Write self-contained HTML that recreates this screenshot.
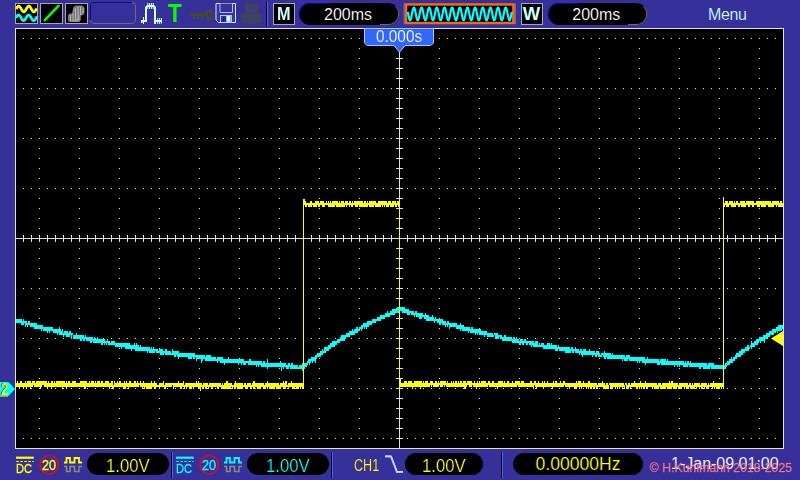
<!DOCTYPE html>
<html lang="en"><head><meta charset="utf-8"><title>DSO</title>
<style>
html,body{margin:0;padding:0}
body{width:800px;height:480px;background:#37309b;position:relative;overflow:hidden;font-family:"Liberation Sans",sans-serif}
.t{position:absolute;white-space:nowrap;line-height:1;margin:0;padding:0}
</style></head>
<body>
<svg width="800" height="480" viewBox="0 0 800 480" style="position:absolute;left:0;top:0" shape-rendering="crispEdges"><rect x="15" y="28" width="769" height="421" fill="#dfe2df"/><rect x="16" y="29" width="767" height="419" fill="#000"/><path fill="#dce0dc" d="M23 38h1v1h-1zM31 38h1v1h-1zM39 38h1v1h-1zM47 38h1v1h-1zM55 38h1v1h-1zM63 38h1v1h-1zM71 38h1v1h-1zM79 38h1v1h-1zM87 38h1v1h-1zM95 38h1v1h-1zM103 38h1v1h-1zM111 38h1v1h-1zM119 38h1v1h-1zM127 38h1v1h-1zM135 38h1v1h-1zM143 38h1v1h-1zM151 38h1v1h-1zM159 38h1v1h-1zM167 38h1v1h-1zM175 38h1v1h-1zM183 38h1v1h-1zM191 38h1v1h-1zM199 38h1v1h-1zM207 38h1v1h-1zM215 38h1v1h-1zM223 38h1v1h-1zM231 38h1v1h-1zM239 38h1v1h-1zM247 38h1v1h-1zM255 38h1v1h-1zM263 38h1v1h-1zM271 38h1v1h-1zM279 38h1v1h-1zM287 38h1v1h-1zM295 38h1v1h-1zM303 38h1v1h-1zM311 38h1v1h-1zM319 38h1v1h-1zM327 38h1v1h-1zM335 38h1v1h-1zM343 38h1v1h-1zM351 38h1v1h-1zM359 38h1v1h-1zM367 38h1v1h-1zM375 38h1v1h-1zM383 38h1v1h-1zM391 38h1v1h-1zM399 38h1v1h-1zM407 38h1v1h-1zM415 38h1v1h-1zM423 38h1v1h-1zM431 38h1v1h-1zM439 38h1v1h-1zM447 38h1v1h-1zM455 38h1v1h-1zM463 38h1v1h-1zM471 38h1v1h-1zM479 38h1v1h-1zM487 38h1v1h-1zM495 38h1v1h-1zM503 38h1v1h-1zM511 38h1v1h-1zM519 38h1v1h-1zM527 38h1v1h-1zM535 38h1v1h-1zM543 38h1v1h-1zM551 38h1v1h-1zM559 38h1v1h-1zM567 38h1v1h-1zM575 38h1v1h-1zM583 38h1v1h-1zM591 38h1v1h-1zM599 38h1v1h-1zM607 38h1v1h-1zM615 38h1v1h-1zM623 38h1v1h-1zM631 38h1v1h-1zM639 38h1v1h-1zM647 38h1v1h-1zM655 38h1v1h-1zM663 38h1v1h-1zM671 38h1v1h-1zM679 38h1v1h-1zM687 38h1v1h-1zM695 38h1v1h-1zM703 38h1v1h-1zM711 38h1v1h-1zM719 38h1v1h-1zM727 38h1v1h-1zM735 38h1v1h-1zM743 38h1v1h-1zM751 38h1v1h-1zM759 38h1v1h-1zM767 38h1v1h-1zM775 38h1v1h-1zM23 88h1v1h-1zM31 88h1v1h-1zM39 88h1v1h-1zM47 88h1v1h-1zM55 88h1v1h-1zM63 88h1v1h-1zM71 88h1v1h-1zM79 88h1v1h-1zM87 88h1v1h-1zM95 88h1v1h-1zM103 88h1v1h-1zM111 88h1v1h-1zM119 88h1v1h-1zM127 88h1v1h-1zM135 88h1v1h-1zM143 88h1v1h-1zM151 88h1v1h-1zM159 88h1v1h-1zM167 88h1v1h-1zM175 88h1v1h-1zM183 88h1v1h-1zM191 88h1v1h-1zM199 88h1v1h-1zM207 88h1v1h-1zM215 88h1v1h-1zM223 88h1v1h-1zM231 88h1v1h-1zM239 88h1v1h-1zM247 88h1v1h-1zM255 88h1v1h-1zM263 88h1v1h-1zM271 88h1v1h-1zM279 88h1v1h-1zM287 88h1v1h-1zM295 88h1v1h-1zM303 88h1v1h-1zM311 88h1v1h-1zM319 88h1v1h-1zM327 88h1v1h-1zM335 88h1v1h-1zM343 88h1v1h-1zM351 88h1v1h-1zM359 88h1v1h-1zM367 88h1v1h-1zM375 88h1v1h-1zM383 88h1v1h-1zM391 88h1v1h-1zM399 88h1v1h-1zM407 88h1v1h-1zM415 88h1v1h-1zM423 88h1v1h-1zM431 88h1v1h-1zM439 88h1v1h-1zM447 88h1v1h-1zM455 88h1v1h-1zM463 88h1v1h-1zM471 88h1v1h-1zM479 88h1v1h-1zM487 88h1v1h-1zM495 88h1v1h-1zM503 88h1v1h-1zM511 88h1v1h-1zM519 88h1v1h-1zM527 88h1v1h-1zM535 88h1v1h-1zM543 88h1v1h-1zM551 88h1v1h-1zM559 88h1v1h-1zM567 88h1v1h-1zM575 88h1v1h-1zM583 88h1v1h-1zM591 88h1v1h-1zM599 88h1v1h-1zM607 88h1v1h-1zM615 88h1v1h-1zM623 88h1v1h-1zM631 88h1v1h-1zM639 88h1v1h-1zM647 88h1v1h-1zM655 88h1v1h-1zM663 88h1v1h-1zM671 88h1v1h-1zM679 88h1v1h-1zM687 88h1v1h-1zM695 88h1v1h-1zM703 88h1v1h-1zM711 88h1v1h-1zM719 88h1v1h-1zM727 88h1v1h-1zM735 88h1v1h-1zM743 88h1v1h-1zM751 88h1v1h-1zM759 88h1v1h-1zM767 88h1v1h-1zM775 88h1v1h-1zM23 138h1v1h-1zM31 138h1v1h-1zM39 138h1v1h-1zM47 138h1v1h-1zM55 138h1v1h-1zM63 138h1v1h-1zM71 138h1v1h-1zM79 138h1v1h-1zM87 138h1v1h-1zM95 138h1v1h-1zM103 138h1v1h-1zM111 138h1v1h-1zM119 138h1v1h-1zM127 138h1v1h-1zM135 138h1v1h-1zM143 138h1v1h-1zM151 138h1v1h-1zM159 138h1v1h-1zM167 138h1v1h-1zM175 138h1v1h-1zM183 138h1v1h-1zM191 138h1v1h-1zM199 138h1v1h-1zM207 138h1v1h-1zM215 138h1v1h-1zM223 138h1v1h-1zM231 138h1v1h-1zM239 138h1v1h-1zM247 138h1v1h-1zM255 138h1v1h-1zM263 138h1v1h-1zM271 138h1v1h-1zM279 138h1v1h-1zM287 138h1v1h-1zM295 138h1v1h-1zM303 138h1v1h-1zM311 138h1v1h-1zM319 138h1v1h-1zM327 138h1v1h-1zM335 138h1v1h-1zM343 138h1v1h-1zM351 138h1v1h-1zM359 138h1v1h-1zM367 138h1v1h-1zM375 138h1v1h-1zM383 138h1v1h-1zM391 138h1v1h-1zM399 138h1v1h-1zM407 138h1v1h-1zM415 138h1v1h-1zM423 138h1v1h-1zM431 138h1v1h-1zM439 138h1v1h-1zM447 138h1v1h-1zM455 138h1v1h-1zM463 138h1v1h-1zM471 138h1v1h-1zM479 138h1v1h-1zM487 138h1v1h-1zM495 138h1v1h-1zM503 138h1v1h-1zM511 138h1v1h-1zM519 138h1v1h-1zM527 138h1v1h-1zM535 138h1v1h-1zM543 138h1v1h-1zM551 138h1v1h-1zM559 138h1v1h-1zM567 138h1v1h-1zM575 138h1v1h-1zM583 138h1v1h-1zM591 138h1v1h-1zM599 138h1v1h-1zM607 138h1v1h-1zM615 138h1v1h-1zM623 138h1v1h-1zM631 138h1v1h-1zM639 138h1v1h-1zM647 138h1v1h-1zM655 138h1v1h-1zM663 138h1v1h-1zM671 138h1v1h-1zM679 138h1v1h-1zM687 138h1v1h-1zM695 138h1v1h-1zM703 138h1v1h-1zM711 138h1v1h-1zM719 138h1v1h-1zM727 138h1v1h-1zM735 138h1v1h-1zM743 138h1v1h-1zM751 138h1v1h-1zM759 138h1v1h-1zM767 138h1v1h-1zM775 138h1v1h-1zM23 188h1v1h-1zM31 188h1v1h-1zM39 188h1v1h-1zM47 188h1v1h-1zM55 188h1v1h-1zM63 188h1v1h-1zM71 188h1v1h-1zM79 188h1v1h-1zM87 188h1v1h-1zM95 188h1v1h-1zM103 188h1v1h-1zM111 188h1v1h-1zM119 188h1v1h-1zM127 188h1v1h-1zM135 188h1v1h-1zM143 188h1v1h-1zM151 188h1v1h-1zM159 188h1v1h-1zM167 188h1v1h-1zM175 188h1v1h-1zM183 188h1v1h-1zM191 188h1v1h-1zM199 188h1v1h-1zM207 188h1v1h-1zM215 188h1v1h-1zM223 188h1v1h-1zM231 188h1v1h-1zM239 188h1v1h-1zM247 188h1v1h-1zM255 188h1v1h-1zM263 188h1v1h-1zM271 188h1v1h-1zM279 188h1v1h-1zM287 188h1v1h-1zM295 188h1v1h-1zM303 188h1v1h-1zM311 188h1v1h-1zM319 188h1v1h-1zM327 188h1v1h-1zM335 188h1v1h-1zM343 188h1v1h-1zM351 188h1v1h-1zM359 188h1v1h-1zM367 188h1v1h-1zM375 188h1v1h-1zM383 188h1v1h-1zM391 188h1v1h-1zM399 188h1v1h-1zM407 188h1v1h-1zM415 188h1v1h-1zM423 188h1v1h-1zM431 188h1v1h-1zM439 188h1v1h-1zM447 188h1v1h-1zM455 188h1v1h-1zM463 188h1v1h-1zM471 188h1v1h-1zM479 188h1v1h-1zM487 188h1v1h-1zM495 188h1v1h-1zM503 188h1v1h-1zM511 188h1v1h-1zM519 188h1v1h-1zM527 188h1v1h-1zM535 188h1v1h-1zM543 188h1v1h-1zM551 188h1v1h-1zM559 188h1v1h-1zM567 188h1v1h-1zM575 188h1v1h-1zM583 188h1v1h-1zM591 188h1v1h-1zM599 188h1v1h-1zM607 188h1v1h-1zM615 188h1v1h-1zM623 188h1v1h-1zM631 188h1v1h-1zM639 188h1v1h-1zM647 188h1v1h-1zM655 188h1v1h-1zM663 188h1v1h-1zM671 188h1v1h-1zM679 188h1v1h-1zM687 188h1v1h-1zM695 188h1v1h-1zM703 188h1v1h-1zM711 188h1v1h-1zM719 188h1v1h-1zM727 188h1v1h-1zM735 188h1v1h-1zM743 188h1v1h-1zM751 188h1v1h-1zM759 188h1v1h-1zM767 188h1v1h-1zM775 188h1v1h-1zM23 288h1v1h-1zM31 288h1v1h-1zM39 288h1v1h-1zM47 288h1v1h-1zM55 288h1v1h-1zM63 288h1v1h-1zM71 288h1v1h-1zM79 288h1v1h-1zM87 288h1v1h-1zM95 288h1v1h-1zM103 288h1v1h-1zM111 288h1v1h-1zM119 288h1v1h-1zM127 288h1v1h-1zM135 288h1v1h-1zM143 288h1v1h-1zM151 288h1v1h-1zM159 288h1v1h-1zM167 288h1v1h-1zM175 288h1v1h-1zM183 288h1v1h-1zM191 288h1v1h-1zM199 288h1v1h-1zM207 288h1v1h-1zM215 288h1v1h-1zM223 288h1v1h-1zM231 288h1v1h-1zM239 288h1v1h-1zM247 288h1v1h-1zM255 288h1v1h-1zM263 288h1v1h-1zM271 288h1v1h-1zM279 288h1v1h-1zM287 288h1v1h-1zM295 288h1v1h-1zM303 288h1v1h-1zM311 288h1v1h-1zM319 288h1v1h-1zM327 288h1v1h-1zM335 288h1v1h-1zM343 288h1v1h-1zM351 288h1v1h-1zM359 288h1v1h-1zM367 288h1v1h-1zM375 288h1v1h-1zM383 288h1v1h-1zM391 288h1v1h-1zM399 288h1v1h-1zM407 288h1v1h-1zM415 288h1v1h-1zM423 288h1v1h-1zM431 288h1v1h-1zM439 288h1v1h-1zM447 288h1v1h-1zM455 288h1v1h-1zM463 288h1v1h-1zM471 288h1v1h-1zM479 288h1v1h-1zM487 288h1v1h-1zM495 288h1v1h-1zM503 288h1v1h-1zM511 288h1v1h-1zM519 288h1v1h-1zM527 288h1v1h-1zM535 288h1v1h-1zM543 288h1v1h-1zM551 288h1v1h-1zM559 288h1v1h-1zM567 288h1v1h-1zM575 288h1v1h-1zM583 288h1v1h-1zM591 288h1v1h-1zM599 288h1v1h-1zM607 288h1v1h-1zM615 288h1v1h-1zM623 288h1v1h-1zM631 288h1v1h-1zM639 288h1v1h-1zM647 288h1v1h-1zM655 288h1v1h-1zM663 288h1v1h-1zM671 288h1v1h-1zM679 288h1v1h-1zM687 288h1v1h-1zM695 288h1v1h-1zM703 288h1v1h-1zM711 288h1v1h-1zM719 288h1v1h-1zM727 288h1v1h-1zM735 288h1v1h-1zM743 288h1v1h-1zM751 288h1v1h-1zM759 288h1v1h-1zM767 288h1v1h-1zM775 288h1v1h-1zM23 338h1v1h-1zM31 338h1v1h-1zM39 338h1v1h-1zM47 338h1v1h-1zM55 338h1v1h-1zM63 338h1v1h-1zM71 338h1v1h-1zM79 338h1v1h-1zM87 338h1v1h-1zM95 338h1v1h-1zM103 338h1v1h-1zM111 338h1v1h-1zM119 338h1v1h-1zM127 338h1v1h-1zM135 338h1v1h-1zM143 338h1v1h-1zM151 338h1v1h-1zM159 338h1v1h-1zM167 338h1v1h-1zM175 338h1v1h-1zM183 338h1v1h-1zM191 338h1v1h-1zM199 338h1v1h-1zM207 338h1v1h-1zM215 338h1v1h-1zM223 338h1v1h-1zM231 338h1v1h-1zM239 338h1v1h-1zM247 338h1v1h-1zM255 338h1v1h-1zM263 338h1v1h-1zM271 338h1v1h-1zM279 338h1v1h-1zM287 338h1v1h-1zM295 338h1v1h-1zM303 338h1v1h-1zM311 338h1v1h-1zM319 338h1v1h-1zM327 338h1v1h-1zM335 338h1v1h-1zM343 338h1v1h-1zM351 338h1v1h-1zM359 338h1v1h-1zM367 338h1v1h-1zM375 338h1v1h-1zM383 338h1v1h-1zM391 338h1v1h-1zM399 338h1v1h-1zM407 338h1v1h-1zM415 338h1v1h-1zM423 338h1v1h-1zM431 338h1v1h-1zM439 338h1v1h-1zM447 338h1v1h-1zM455 338h1v1h-1zM463 338h1v1h-1zM471 338h1v1h-1zM479 338h1v1h-1zM487 338h1v1h-1zM495 338h1v1h-1zM503 338h1v1h-1zM511 338h1v1h-1zM519 338h1v1h-1zM527 338h1v1h-1zM535 338h1v1h-1zM543 338h1v1h-1zM551 338h1v1h-1zM559 338h1v1h-1zM567 338h1v1h-1zM575 338h1v1h-1zM583 338h1v1h-1zM591 338h1v1h-1zM599 338h1v1h-1zM607 338h1v1h-1zM615 338h1v1h-1zM623 338h1v1h-1zM631 338h1v1h-1zM639 338h1v1h-1zM647 338h1v1h-1zM655 338h1v1h-1zM663 338h1v1h-1zM671 338h1v1h-1zM679 338h1v1h-1zM687 338h1v1h-1zM695 338h1v1h-1zM703 338h1v1h-1zM711 338h1v1h-1zM719 338h1v1h-1zM727 338h1v1h-1zM735 338h1v1h-1zM743 338h1v1h-1zM751 338h1v1h-1zM759 338h1v1h-1zM767 338h1v1h-1zM775 338h1v1h-1zM23 388h1v1h-1zM31 388h1v1h-1zM39 388h1v1h-1zM47 388h1v1h-1zM55 388h1v1h-1zM63 388h1v1h-1zM71 388h1v1h-1zM79 388h1v1h-1zM87 388h1v1h-1zM95 388h1v1h-1zM103 388h1v1h-1zM111 388h1v1h-1zM119 388h1v1h-1zM127 388h1v1h-1zM135 388h1v1h-1zM143 388h1v1h-1zM151 388h1v1h-1zM159 388h1v1h-1zM167 388h1v1h-1zM175 388h1v1h-1zM183 388h1v1h-1zM191 388h1v1h-1zM199 388h1v1h-1zM207 388h1v1h-1zM215 388h1v1h-1zM223 388h1v1h-1zM231 388h1v1h-1zM239 388h1v1h-1zM247 388h1v1h-1zM255 388h1v1h-1zM263 388h1v1h-1zM271 388h1v1h-1zM279 388h1v1h-1zM287 388h1v1h-1zM295 388h1v1h-1zM303 388h1v1h-1zM311 388h1v1h-1zM319 388h1v1h-1zM327 388h1v1h-1zM335 388h1v1h-1zM343 388h1v1h-1zM351 388h1v1h-1zM359 388h1v1h-1zM367 388h1v1h-1zM375 388h1v1h-1zM383 388h1v1h-1zM391 388h1v1h-1zM399 388h1v1h-1zM407 388h1v1h-1zM415 388h1v1h-1zM423 388h1v1h-1zM431 388h1v1h-1zM439 388h1v1h-1zM447 388h1v1h-1zM455 388h1v1h-1zM463 388h1v1h-1zM471 388h1v1h-1zM479 388h1v1h-1zM487 388h1v1h-1zM495 388h1v1h-1zM503 388h1v1h-1zM511 388h1v1h-1zM519 388h1v1h-1zM527 388h1v1h-1zM535 388h1v1h-1zM543 388h1v1h-1zM551 388h1v1h-1zM559 388h1v1h-1zM567 388h1v1h-1zM575 388h1v1h-1zM583 388h1v1h-1zM591 388h1v1h-1zM599 388h1v1h-1zM607 388h1v1h-1zM615 388h1v1h-1zM623 388h1v1h-1zM631 388h1v1h-1zM639 388h1v1h-1zM647 388h1v1h-1zM655 388h1v1h-1zM663 388h1v1h-1zM671 388h1v1h-1zM679 388h1v1h-1zM687 388h1v1h-1zM695 388h1v1h-1zM703 388h1v1h-1zM711 388h1v1h-1zM719 388h1v1h-1zM727 388h1v1h-1zM735 388h1v1h-1zM743 388h1v1h-1zM751 388h1v1h-1zM759 388h1v1h-1zM767 388h1v1h-1zM775 388h1v1h-1zM23 438h1v1h-1zM31 438h1v1h-1zM39 438h1v1h-1zM47 438h1v1h-1zM55 438h1v1h-1zM63 438h1v1h-1zM71 438h1v1h-1zM79 438h1v1h-1zM87 438h1v1h-1zM95 438h1v1h-1zM103 438h1v1h-1zM111 438h1v1h-1zM119 438h1v1h-1zM127 438h1v1h-1zM135 438h1v1h-1zM143 438h1v1h-1zM151 438h1v1h-1zM159 438h1v1h-1zM167 438h1v1h-1zM175 438h1v1h-1zM183 438h1v1h-1zM191 438h1v1h-1zM199 438h1v1h-1zM207 438h1v1h-1zM215 438h1v1h-1zM223 438h1v1h-1zM231 438h1v1h-1zM239 438h1v1h-1zM247 438h1v1h-1zM255 438h1v1h-1zM263 438h1v1h-1zM271 438h1v1h-1zM279 438h1v1h-1zM287 438h1v1h-1zM295 438h1v1h-1zM303 438h1v1h-1zM311 438h1v1h-1zM319 438h1v1h-1zM327 438h1v1h-1zM335 438h1v1h-1zM343 438h1v1h-1zM351 438h1v1h-1zM359 438h1v1h-1zM367 438h1v1h-1zM375 438h1v1h-1zM383 438h1v1h-1zM391 438h1v1h-1zM399 438h1v1h-1zM407 438h1v1h-1zM415 438h1v1h-1zM423 438h1v1h-1zM431 438h1v1h-1zM439 438h1v1h-1zM447 438h1v1h-1zM455 438h1v1h-1zM463 438h1v1h-1zM471 438h1v1h-1zM479 438h1v1h-1zM487 438h1v1h-1zM495 438h1v1h-1zM503 438h1v1h-1zM511 438h1v1h-1zM519 438h1v1h-1zM527 438h1v1h-1zM535 438h1v1h-1zM543 438h1v1h-1zM551 438h1v1h-1zM559 438h1v1h-1zM567 438h1v1h-1zM575 438h1v1h-1zM583 438h1v1h-1zM591 438h1v1h-1zM599 438h1v1h-1zM607 438h1v1h-1zM615 438h1v1h-1zM623 438h1v1h-1zM631 438h1v1h-1zM639 438h1v1h-1zM647 438h1v1h-1zM655 438h1v1h-1zM663 438h1v1h-1zM671 438h1v1h-1zM679 438h1v1h-1zM687 438h1v1h-1zM695 438h1v1h-1zM703 438h1v1h-1zM711 438h1v1h-1zM719 438h1v1h-1zM727 438h1v1h-1zM735 438h1v1h-1zM743 438h1v1h-1zM751 438h1v1h-1zM759 438h1v1h-1zM767 438h1v1h-1zM775 438h1v1h-1zM39 48h1v1h-1zM39 58h1v1h-1zM39 68h1v1h-1zM39 78h1v1h-1zM39 98h1v1h-1zM39 108h1v1h-1zM39 118h1v1h-1zM39 128h1v1h-1zM39 148h1v1h-1zM39 158h1v1h-1zM39 168h1v1h-1zM39 178h1v1h-1zM39 198h1v1h-1zM39 208h1v1h-1zM39 218h1v1h-1zM39 228h1v1h-1zM39 248h1v1h-1zM39 258h1v1h-1zM39 268h1v1h-1zM39 278h1v1h-1zM39 298h1v1h-1zM39 308h1v1h-1zM39 318h1v1h-1zM39 328h1v1h-1zM39 348h1v1h-1zM39 358h1v1h-1zM39 368h1v1h-1zM39 378h1v1h-1zM39 398h1v1h-1zM39 408h1v1h-1zM39 418h1v1h-1zM39 428h1v1h-1zM79 48h1v1h-1zM79 58h1v1h-1zM79 68h1v1h-1zM79 78h1v1h-1zM79 98h1v1h-1zM79 108h1v1h-1zM79 118h1v1h-1zM79 128h1v1h-1zM79 148h1v1h-1zM79 158h1v1h-1zM79 168h1v1h-1zM79 178h1v1h-1zM79 198h1v1h-1zM79 208h1v1h-1zM79 218h1v1h-1zM79 228h1v1h-1zM79 248h1v1h-1zM79 258h1v1h-1zM79 268h1v1h-1zM79 278h1v1h-1zM79 298h1v1h-1zM79 308h1v1h-1zM79 318h1v1h-1zM79 328h1v1h-1zM79 348h1v1h-1zM79 358h1v1h-1zM79 368h1v1h-1zM79 378h1v1h-1zM79 398h1v1h-1zM79 408h1v1h-1zM79 418h1v1h-1zM79 428h1v1h-1zM119 48h1v1h-1zM119 58h1v1h-1zM119 68h1v1h-1zM119 78h1v1h-1zM119 98h1v1h-1zM119 108h1v1h-1zM119 118h1v1h-1zM119 128h1v1h-1zM119 148h1v1h-1zM119 158h1v1h-1zM119 168h1v1h-1zM119 178h1v1h-1zM119 198h1v1h-1zM119 208h1v1h-1zM119 218h1v1h-1zM119 228h1v1h-1zM119 248h1v1h-1zM119 258h1v1h-1zM119 268h1v1h-1zM119 278h1v1h-1zM119 298h1v1h-1zM119 308h1v1h-1zM119 318h1v1h-1zM119 328h1v1h-1zM119 348h1v1h-1zM119 358h1v1h-1zM119 368h1v1h-1zM119 378h1v1h-1zM119 398h1v1h-1zM119 408h1v1h-1zM119 418h1v1h-1zM119 428h1v1h-1zM159 48h1v1h-1zM159 58h1v1h-1zM159 68h1v1h-1zM159 78h1v1h-1zM159 98h1v1h-1zM159 108h1v1h-1zM159 118h1v1h-1zM159 128h1v1h-1zM159 148h1v1h-1zM159 158h1v1h-1zM159 168h1v1h-1zM159 178h1v1h-1zM159 198h1v1h-1zM159 208h1v1h-1zM159 218h1v1h-1zM159 228h1v1h-1zM159 248h1v1h-1zM159 258h1v1h-1zM159 268h1v1h-1zM159 278h1v1h-1zM159 298h1v1h-1zM159 308h1v1h-1zM159 318h1v1h-1zM159 328h1v1h-1zM159 348h1v1h-1zM159 358h1v1h-1zM159 368h1v1h-1zM159 378h1v1h-1zM159 398h1v1h-1zM159 408h1v1h-1zM159 418h1v1h-1zM159 428h1v1h-1zM199 48h1v1h-1zM199 58h1v1h-1zM199 68h1v1h-1zM199 78h1v1h-1zM199 98h1v1h-1zM199 108h1v1h-1zM199 118h1v1h-1zM199 128h1v1h-1zM199 148h1v1h-1zM199 158h1v1h-1zM199 168h1v1h-1zM199 178h1v1h-1zM199 198h1v1h-1zM199 208h1v1h-1zM199 218h1v1h-1zM199 228h1v1h-1zM199 248h1v1h-1zM199 258h1v1h-1zM199 268h1v1h-1zM199 278h1v1h-1zM199 298h1v1h-1zM199 308h1v1h-1zM199 318h1v1h-1zM199 328h1v1h-1zM199 348h1v1h-1zM199 358h1v1h-1zM199 368h1v1h-1zM199 378h1v1h-1zM199 398h1v1h-1zM199 408h1v1h-1zM199 418h1v1h-1zM199 428h1v1h-1zM239 48h1v1h-1zM239 58h1v1h-1zM239 68h1v1h-1zM239 78h1v1h-1zM239 98h1v1h-1zM239 108h1v1h-1zM239 118h1v1h-1zM239 128h1v1h-1zM239 148h1v1h-1zM239 158h1v1h-1zM239 168h1v1h-1zM239 178h1v1h-1zM239 198h1v1h-1zM239 208h1v1h-1zM239 218h1v1h-1zM239 228h1v1h-1zM239 248h1v1h-1zM239 258h1v1h-1zM239 268h1v1h-1zM239 278h1v1h-1zM239 298h1v1h-1zM239 308h1v1h-1zM239 318h1v1h-1zM239 328h1v1h-1zM239 348h1v1h-1zM239 358h1v1h-1zM239 368h1v1h-1zM239 378h1v1h-1zM239 398h1v1h-1zM239 408h1v1h-1zM239 418h1v1h-1zM239 428h1v1h-1zM279 48h1v1h-1zM279 58h1v1h-1zM279 68h1v1h-1zM279 78h1v1h-1zM279 98h1v1h-1zM279 108h1v1h-1zM279 118h1v1h-1zM279 128h1v1h-1zM279 148h1v1h-1zM279 158h1v1h-1zM279 168h1v1h-1zM279 178h1v1h-1zM279 198h1v1h-1zM279 208h1v1h-1zM279 218h1v1h-1zM279 228h1v1h-1zM279 248h1v1h-1zM279 258h1v1h-1zM279 268h1v1h-1zM279 278h1v1h-1zM279 298h1v1h-1zM279 308h1v1h-1zM279 318h1v1h-1zM279 328h1v1h-1zM279 348h1v1h-1zM279 358h1v1h-1zM279 368h1v1h-1zM279 378h1v1h-1zM279 398h1v1h-1zM279 408h1v1h-1zM279 418h1v1h-1zM279 428h1v1h-1zM319 48h1v1h-1zM319 58h1v1h-1zM319 68h1v1h-1zM319 78h1v1h-1zM319 98h1v1h-1zM319 108h1v1h-1zM319 118h1v1h-1zM319 128h1v1h-1zM319 148h1v1h-1zM319 158h1v1h-1zM319 168h1v1h-1zM319 178h1v1h-1zM319 198h1v1h-1zM319 208h1v1h-1zM319 218h1v1h-1zM319 228h1v1h-1zM319 248h1v1h-1zM319 258h1v1h-1zM319 268h1v1h-1zM319 278h1v1h-1zM319 298h1v1h-1zM319 308h1v1h-1zM319 318h1v1h-1zM319 328h1v1h-1zM319 348h1v1h-1zM319 358h1v1h-1zM319 368h1v1h-1zM319 378h1v1h-1zM319 398h1v1h-1zM319 408h1v1h-1zM319 418h1v1h-1zM319 428h1v1h-1zM359 48h1v1h-1zM359 58h1v1h-1zM359 68h1v1h-1zM359 78h1v1h-1zM359 98h1v1h-1zM359 108h1v1h-1zM359 118h1v1h-1zM359 128h1v1h-1zM359 148h1v1h-1zM359 158h1v1h-1zM359 168h1v1h-1zM359 178h1v1h-1zM359 198h1v1h-1zM359 208h1v1h-1zM359 218h1v1h-1zM359 228h1v1h-1zM359 248h1v1h-1zM359 258h1v1h-1zM359 268h1v1h-1zM359 278h1v1h-1zM359 298h1v1h-1zM359 308h1v1h-1zM359 318h1v1h-1zM359 328h1v1h-1zM359 348h1v1h-1zM359 358h1v1h-1zM359 368h1v1h-1zM359 378h1v1h-1zM359 398h1v1h-1zM359 408h1v1h-1zM359 418h1v1h-1zM359 428h1v1h-1zM439 48h1v1h-1zM439 58h1v1h-1zM439 68h1v1h-1zM439 78h1v1h-1zM439 98h1v1h-1zM439 108h1v1h-1zM439 118h1v1h-1zM439 128h1v1h-1zM439 148h1v1h-1zM439 158h1v1h-1zM439 168h1v1h-1zM439 178h1v1h-1zM439 198h1v1h-1zM439 208h1v1h-1zM439 218h1v1h-1zM439 228h1v1h-1zM439 248h1v1h-1zM439 258h1v1h-1zM439 268h1v1h-1zM439 278h1v1h-1zM439 298h1v1h-1zM439 308h1v1h-1zM439 318h1v1h-1zM439 328h1v1h-1zM439 348h1v1h-1zM439 358h1v1h-1zM439 368h1v1h-1zM439 378h1v1h-1zM439 398h1v1h-1zM439 408h1v1h-1zM439 418h1v1h-1zM439 428h1v1h-1zM479 48h1v1h-1zM479 58h1v1h-1zM479 68h1v1h-1zM479 78h1v1h-1zM479 98h1v1h-1zM479 108h1v1h-1zM479 118h1v1h-1zM479 128h1v1h-1zM479 148h1v1h-1zM479 158h1v1h-1zM479 168h1v1h-1zM479 178h1v1h-1zM479 198h1v1h-1zM479 208h1v1h-1zM479 218h1v1h-1zM479 228h1v1h-1zM479 248h1v1h-1zM479 258h1v1h-1zM479 268h1v1h-1zM479 278h1v1h-1zM479 298h1v1h-1zM479 308h1v1h-1zM479 318h1v1h-1zM479 328h1v1h-1zM479 348h1v1h-1zM479 358h1v1h-1zM479 368h1v1h-1zM479 378h1v1h-1zM479 398h1v1h-1zM479 408h1v1h-1zM479 418h1v1h-1zM479 428h1v1h-1zM519 48h1v1h-1zM519 58h1v1h-1zM519 68h1v1h-1zM519 78h1v1h-1zM519 98h1v1h-1zM519 108h1v1h-1zM519 118h1v1h-1zM519 128h1v1h-1zM519 148h1v1h-1zM519 158h1v1h-1zM519 168h1v1h-1zM519 178h1v1h-1zM519 198h1v1h-1zM519 208h1v1h-1zM519 218h1v1h-1zM519 228h1v1h-1zM519 248h1v1h-1zM519 258h1v1h-1zM519 268h1v1h-1zM519 278h1v1h-1zM519 298h1v1h-1zM519 308h1v1h-1zM519 318h1v1h-1zM519 328h1v1h-1zM519 348h1v1h-1zM519 358h1v1h-1zM519 368h1v1h-1zM519 378h1v1h-1zM519 398h1v1h-1zM519 408h1v1h-1zM519 418h1v1h-1zM519 428h1v1h-1zM559 48h1v1h-1zM559 58h1v1h-1zM559 68h1v1h-1zM559 78h1v1h-1zM559 98h1v1h-1zM559 108h1v1h-1zM559 118h1v1h-1zM559 128h1v1h-1zM559 148h1v1h-1zM559 158h1v1h-1zM559 168h1v1h-1zM559 178h1v1h-1zM559 198h1v1h-1zM559 208h1v1h-1zM559 218h1v1h-1zM559 228h1v1h-1zM559 248h1v1h-1zM559 258h1v1h-1zM559 268h1v1h-1zM559 278h1v1h-1zM559 298h1v1h-1zM559 308h1v1h-1zM559 318h1v1h-1zM559 328h1v1h-1zM559 348h1v1h-1zM559 358h1v1h-1zM559 368h1v1h-1zM559 378h1v1h-1zM559 398h1v1h-1zM559 408h1v1h-1zM559 418h1v1h-1zM559 428h1v1h-1zM599 48h1v1h-1zM599 58h1v1h-1zM599 68h1v1h-1zM599 78h1v1h-1zM599 98h1v1h-1zM599 108h1v1h-1zM599 118h1v1h-1zM599 128h1v1h-1zM599 148h1v1h-1zM599 158h1v1h-1zM599 168h1v1h-1zM599 178h1v1h-1zM599 198h1v1h-1zM599 208h1v1h-1zM599 218h1v1h-1zM599 228h1v1h-1zM599 248h1v1h-1zM599 258h1v1h-1zM599 268h1v1h-1zM599 278h1v1h-1zM599 298h1v1h-1zM599 308h1v1h-1zM599 318h1v1h-1zM599 328h1v1h-1zM599 348h1v1h-1zM599 358h1v1h-1zM599 368h1v1h-1zM599 378h1v1h-1zM599 398h1v1h-1zM599 408h1v1h-1zM599 418h1v1h-1zM599 428h1v1h-1zM639 48h1v1h-1zM639 58h1v1h-1zM639 68h1v1h-1zM639 78h1v1h-1zM639 98h1v1h-1zM639 108h1v1h-1zM639 118h1v1h-1zM639 128h1v1h-1zM639 148h1v1h-1zM639 158h1v1h-1zM639 168h1v1h-1zM639 178h1v1h-1zM639 198h1v1h-1zM639 208h1v1h-1zM639 218h1v1h-1zM639 228h1v1h-1zM639 248h1v1h-1zM639 258h1v1h-1zM639 268h1v1h-1zM639 278h1v1h-1zM639 298h1v1h-1zM639 308h1v1h-1zM639 318h1v1h-1zM639 328h1v1h-1zM639 348h1v1h-1zM639 358h1v1h-1zM639 368h1v1h-1zM639 378h1v1h-1zM639 398h1v1h-1zM639 408h1v1h-1zM639 418h1v1h-1zM639 428h1v1h-1zM679 48h1v1h-1zM679 58h1v1h-1zM679 68h1v1h-1zM679 78h1v1h-1zM679 98h1v1h-1zM679 108h1v1h-1zM679 118h1v1h-1zM679 128h1v1h-1zM679 148h1v1h-1zM679 158h1v1h-1zM679 168h1v1h-1zM679 178h1v1h-1zM679 198h1v1h-1zM679 208h1v1h-1zM679 218h1v1h-1zM679 228h1v1h-1zM679 248h1v1h-1zM679 258h1v1h-1zM679 268h1v1h-1zM679 278h1v1h-1zM679 298h1v1h-1zM679 308h1v1h-1zM679 318h1v1h-1zM679 328h1v1h-1zM679 348h1v1h-1zM679 358h1v1h-1zM679 368h1v1h-1zM679 378h1v1h-1zM679 398h1v1h-1zM679 408h1v1h-1zM679 418h1v1h-1zM679 428h1v1h-1zM719 48h1v1h-1zM719 58h1v1h-1zM719 68h1v1h-1zM719 78h1v1h-1zM719 98h1v1h-1zM719 108h1v1h-1zM719 118h1v1h-1zM719 128h1v1h-1zM719 148h1v1h-1zM719 158h1v1h-1zM719 168h1v1h-1zM719 178h1v1h-1zM719 198h1v1h-1zM719 208h1v1h-1zM719 218h1v1h-1zM719 228h1v1h-1zM719 248h1v1h-1zM719 258h1v1h-1zM719 268h1v1h-1zM719 278h1v1h-1zM719 298h1v1h-1zM719 308h1v1h-1zM719 318h1v1h-1zM719 328h1v1h-1zM719 348h1v1h-1zM719 358h1v1h-1zM719 368h1v1h-1zM719 378h1v1h-1zM719 398h1v1h-1zM719 408h1v1h-1zM719 418h1v1h-1zM719 428h1v1h-1zM759 48h1v1h-1zM759 58h1v1h-1zM759 68h1v1h-1zM759 78h1v1h-1zM759 98h1v1h-1zM759 108h1v1h-1zM759 118h1v1h-1zM759 128h1v1h-1zM759 148h1v1h-1zM759 158h1v1h-1zM759 168h1v1h-1zM759 178h1v1h-1zM759 198h1v1h-1zM759 208h1v1h-1zM759 218h1v1h-1zM759 228h1v1h-1zM759 248h1v1h-1zM759 258h1v1h-1zM759 268h1v1h-1zM759 278h1v1h-1zM759 298h1v1h-1zM759 308h1v1h-1zM759 318h1v1h-1zM759 328h1v1h-1zM759 348h1v1h-1zM759 358h1v1h-1zM759 368h1v1h-1zM759 378h1v1h-1zM759 398h1v1h-1zM759 408h1v1h-1zM759 418h1v1h-1zM759 428h1v1h-1z"/><path fill="#dfe2df" d="M16 238h767v1h-767zM23 235h1v7h-1zM31 235h1v7h-1zM39 235h1v7h-1zM47 235h1v7h-1zM55 235h1v7h-1zM63 235h1v7h-1zM71 235h1v7h-1zM79 235h1v7h-1zM87 235h1v7h-1zM95 235h1v7h-1zM103 235h1v7h-1zM111 235h1v7h-1zM119 235h1v7h-1zM127 235h1v7h-1zM135 235h1v7h-1zM143 235h1v7h-1zM151 235h1v7h-1zM159 235h1v7h-1zM167 235h1v7h-1zM175 235h1v7h-1zM183 235h1v7h-1zM191 235h1v7h-1zM199 235h1v7h-1zM207 235h1v7h-1zM215 235h1v7h-1zM223 235h1v7h-1zM231 235h1v7h-1zM239 235h1v7h-1zM247 235h1v7h-1zM255 235h1v7h-1zM263 235h1v7h-1zM271 235h1v7h-1zM279 235h1v7h-1zM287 235h1v7h-1zM295 235h1v7h-1zM303 235h1v7h-1zM311 235h1v7h-1zM319 235h1v7h-1zM327 235h1v7h-1zM335 235h1v7h-1zM343 235h1v7h-1zM351 235h1v7h-1zM359 235h1v7h-1zM367 235h1v7h-1zM375 235h1v7h-1zM383 235h1v7h-1zM391 235h1v7h-1zM399 235h1v7h-1zM407 235h1v7h-1zM415 235h1v7h-1zM423 235h1v7h-1zM431 235h1v7h-1zM439 235h1v7h-1zM447 235h1v7h-1zM455 235h1v7h-1zM463 235h1v7h-1zM471 235h1v7h-1zM479 235h1v7h-1zM487 235h1v7h-1zM495 235h1v7h-1zM503 235h1v7h-1zM511 235h1v7h-1zM519 235h1v7h-1zM527 235h1v7h-1zM535 235h1v7h-1zM543 235h1v7h-1zM551 235h1v7h-1zM559 235h1v7h-1zM567 235h1v7h-1zM575 235h1v7h-1zM583 235h1v7h-1zM591 235h1v7h-1zM599 235h1v7h-1zM607 235h1v7h-1zM615 235h1v7h-1zM623 235h1v7h-1zM631 235h1v7h-1zM639 235h1v7h-1zM647 235h1v7h-1zM655 235h1v7h-1zM663 235h1v7h-1zM671 235h1v7h-1zM679 235h1v7h-1zM687 235h1v7h-1zM695 235h1v7h-1zM703 235h1v7h-1zM711 235h1v7h-1zM719 235h1v7h-1zM727 235h1v7h-1zM735 235h1v7h-1zM743 235h1v7h-1zM751 235h1v7h-1zM759 235h1v7h-1zM767 235h1v7h-1zM775 235h1v7h-1zM399 52h1v396h-1zM396 58h7v1h-7zM396 68h7v1h-7zM396 78h7v1h-7zM396 88h7v1h-7zM396 98h7v1h-7zM396 108h7v1h-7zM396 118h7v1h-7zM396 128h7v1h-7zM396 138h7v1h-7zM396 148h7v1h-7zM396 158h7v1h-7zM396 168h7v1h-7zM396 178h7v1h-7zM396 188h7v1h-7zM396 198h7v1h-7zM396 208h7v1h-7zM396 218h7v1h-7zM396 228h7v1h-7zM396 238h7v1h-7zM396 248h7v1h-7zM396 258h7v1h-7zM396 268h7v1h-7zM396 278h7v1h-7zM396 288h7v1h-7zM396 298h7v1h-7zM396 308h7v1h-7zM396 318h7v1h-7zM396 328h7v1h-7zM396 338h7v1h-7zM396 348h7v1h-7zM396 358h7v1h-7zM396 368h7v1h-7zM396 378h7v1h-7zM396 388h7v1h-7zM396 398h7v1h-7zM396 408h7v1h-7zM396 418h7v1h-7zM396 428h7v1h-7zM396 438h7v1h-7z"/><path fill="#00ffff" d="M16 319h5v4h-5zM21 319h1v6h-1zM22 321h1v4h-1zM23 319h1v6h-1zM24 321h1v2h-1zM25 321h1v6h-1zM26 321h1v4h-1zM27 323h1v4h-1zM28 321h2v4h-2zM30 323h4v4h-4zM34 323h3v6h-3zM37 325h4v4h-4zM41 325h1v6h-1zM42 325h1v4h-1zM43 327h4v4h-4zM47 327h1v6h-1zM48 327h1v4h-1zM49 327h1v6h-1zM50 327h3v4h-3zM53 329h4v4h-4zM57 329h1v6h-1zM58 329h1v4h-1zM59 327h1v8h-1zM60 329h1v6h-1zM61 331h1v4h-1zM62 329h1v6h-1zM63 333h1v4h-1zM64 331h2v4h-2zM66 331h2v6h-2zM68 333h1v4h-1zM69 331h1v6h-1zM70 331h1v4h-1zM71 333h1v6h-1zM72 333h1v2h-1zM73 335h3v4h-3zM76 333h1v6h-1zM77 335h3v4h-3zM80 335h2v6h-2zM82 335h1v4h-1zM83 335h1v6h-1zM84 337h1v4h-1zM85 335h1v4h-1zM86 337h4v4h-4zM90 337h2v6h-2zM92 337h1v4h-1zM93 339h1v4h-1zM94 337h1v6h-1zM95 339h2v4h-2zM97 337h1v6h-1zM98 339h3v4h-3zM101 339h2v6h-2zM103 339h1v4h-1zM104 339h1v6h-1zM105 341h1v2h-1zM106 341h1v4h-1zM107 339h1v4h-1zM108 341h2v4h-2zM110 343h1v2h-1zM111 341h4v4h-4zM115 343h6v4h-6zM121 343h1v6h-1zM122 343h3v4h-3zM125 343h5v6h-5zM130 345h1v4h-1zM131 345h1v6h-1zM132 345h2v4h-2zM134 343h1v6h-1zM135 345h1v6h-1zM136 343h1v8h-1zM137 345h2v6h-2zM139 347h1v4h-1zM140 345h1v6h-1zM141 347h6v4h-6zM147 347h1v6h-1zM148 347h1v4h-1zM149 347h1v6h-1zM150 349h1v4h-1zM151 347h1v6h-1zM152 349h1v4h-1zM153 347h1v6h-1zM154 349h1v4h-1zM155 349h1v2h-1zM156 349h2v4h-2zM158 351h1v2h-1zM159 349h1v4h-1zM160 349h3v6h-3zM163 351h1v4h-1zM164 351h1v2h-1zM165 349h2v6h-2zM167 351h4v4h-4zM171 353h1v2h-1zM172 349h1v6h-1zM173 351h1v4h-1zM174 351h2v6h-2zM176 351h1v4h-1zM177 351h1v6h-1zM178 351h1v8h-1zM179 353h9v4h-9zM188 353h4v6h-4zM192 353h1v4h-1zM193 353h2v6h-2zM195 355h1v2h-1zM196 355h1v6h-1zM197 355h4v4h-4zM201 355h1v8h-1zM202 355h1v6h-1zM203 355h2v4h-2zM205 357h1v4h-1zM206 355h5v6h-5zM211 357h5v4h-5zM216 359h1v2h-1zM217 357h1v6h-1zM218 357h2v4h-2zM220 357h3v6h-3zM223 359h1v4h-1zM224 359h1v6h-1zM225 359h3v4h-3zM228 357h1v6h-1zM229 359h9v4h-9zM238 359h1v6h-1zM239 359h2v4h-2zM241 359h1v6h-1zM242 359h1v4h-1zM243 359h1v6h-1zM244 361h2v4h-2zM246 361h2v2h-2zM248 361h1v4h-1zM249 359h2v6h-2zM251 361h5v4h-5zM256 361h1v6h-1zM257 361h1v4h-1zM258 361h1v6h-1zM259 361h2v4h-2zM261 361h1v6h-1zM262 363h1v4h-1zM263 361h2v6h-2zM265 363h2v4h-2zM267 359h1v10h-1zM268 363h12v4h-12zM280 361h1v6h-1zM281 363h1v8h-1zM282 363h1v4h-1zM283 363h1v6h-1zM284 363h2v4h-2zM286 365h2v4h-2zM288 363h1v6h-1zM289 363h1v4h-1zM290 365h1v4h-1zM291 363h2v6h-2zM293 365h5v4h-5zM298 367h1v2h-1zM299 365h3v4h-3zM302 363h1v8h-1zM303 365h1v2h-1zM304 363h1v6h-1zM305 363h2v4h-2zM307 361h1v4h-1zM308 359h1v4h-1zM309 359h1v6h-1zM310 359h1v4h-1zM311 357h1v4h-1zM312 357h1v6h-1zM313 357h2v4h-2zM315 355h1v8h-1zM316 355h1v4h-1zM317 353h3v4h-3zM320 351h1v6h-1zM321 351h1v4h-1zM322 349h1v6h-1zM323 351h1v2h-1zM324 347h2v6h-2zM326 347h2v4h-2zM328 345h1v6h-1zM329 345h1v4h-1zM330 343h1v6h-1zM331 343h1v4h-1zM332 341h3v6h-3zM335 341h2v4h-2zM337 339h3v4h-3zM340 337h1v4h-1zM341 335h4v6h-4zM345 335h1v4h-1zM346 333h3v4h-3zM349 331h1v6h-1zM350 331h2v4h-2zM352 329h1v6h-1zM353 331h1v4h-1zM354 329h1v6h-1zM355 329h1v4h-1zM356 327h2v6h-2zM358 329h1v2h-1zM359 327h1v4h-1zM360 327h1v2h-1zM361 325h1v6h-1zM362 325h1v4h-1zM363 323h1v4h-1zM364 323h1v6h-1zM365 323h1v4h-1zM366 323h1v6h-1zM367 321h2v6h-2zM369 321h3v4h-3zM372 319h4v4h-4zM376 319h1v2h-1zM377 317h3v4h-3zM380 315h1v6h-1zM381 315h4v4h-4zM385 313h2v4h-2zM387 311h1v6h-1zM388 313h2v4h-2zM390 311h2v4h-2zM392 309h3v6h-3zM395 309h2v4h-2zM397 307h2v6h-2zM399 307h3v4h-3zM402 307h3v6h-3zM405 309h2v4h-2zM407 309h2v6h-2zM409 311h1v4h-1zM410 311h1v2h-1zM411 311h3v4h-3zM414 313h1v4h-1zM415 311h1v4h-1zM416 311h1v6h-1zM417 313h2v4h-2zM419 313h3v6h-3zM422 313h1v4h-1zM423 315h1v2h-1zM424 315h1v4h-1zM425 313h1v6h-1zM426 315h3v6h-3zM429 317h3v4h-3zM432 315h1v6h-1zM433 317h1v4h-1zM434 319h1v4h-1zM435 317h1v4h-1zM436 319h1v2h-1zM437 319h2v4h-2zM439 319h2v6h-2zM441 319h1v4h-1zM442 319h1v6h-1zM443 321h2v4h-2zM445 321h1v6h-1zM446 323h1v2h-1zM447 321h1v6h-1zM448 321h1v4h-1zM449 323h1v6h-1zM450 323h6v4h-6zM456 323h1v6h-1zM457 325h3v4h-3zM460 323h1v8h-1zM461 325h1v4h-1zM462 325h2v6h-2zM464 327h4v4h-4zM468 327h1v6h-1zM469 327h1v4h-1zM470 329h1v4h-1zM471 327h2v6h-2zM473 329h2v4h-2zM475 329h1v6h-1zM476 329h1v4h-1zM477 329h1v6h-1zM478 329h1v4h-1zM479 329h2v6h-2zM481 331h3v4h-3zM484 331h1v6h-1zM485 331h2v4h-2zM487 333h6v4h-6zM493 335h1v2h-1zM494 333h1v2h-1zM495 333h3v6h-3zM498 335h1v4h-1zM499 335h1v2h-1zM500 335h2v4h-2zM502 337h2v4h-2zM504 335h2v6h-2zM506 337h6v4h-6zM512 339h1v4h-1zM513 337h2v6h-2zM515 339h1v4h-1zM516 337h1v6h-1zM517 339h2v4h-2zM519 341h1v4h-1zM520 339h1v6h-1zM521 339h1v4h-1zM522 339h1v6h-1zM523 341h1v4h-1zM524 339h2v4h-2zM526 341h2v4h-2zM528 341h1v2h-1zM529 341h2v4h-2zM531 341h1v6h-1zM532 341h1v4h-1zM533 341h1v6h-1zM534 343h1v4h-1zM535 341h3v6h-3zM538 345h1v2h-1zM539 343h1v4h-1zM540 345h1v2h-1zM541 343h2v4h-2zM543 343h1v6h-1zM544 345h3v4h-3zM547 343h3v6h-3zM550 345h1v4h-1zM551 343h1v6h-1zM552 345h3v4h-3zM555 345h2v6h-2zM557 347h1v4h-1zM558 345h1v4h-1zM559 347h6v4h-6zM565 347h5v6h-5zM570 349h1v4h-1zM571 347h1v4h-1zM572 347h1v6h-1zM573 349h1v4h-1zM574 349h1v2h-1zM575 347h1v6h-1zM576 349h3v4h-3zM579 351h1v4h-1zM580 349h1v4h-1zM581 349h1v6h-1zM582 351h1v6h-1zM583 349h3v6h-3zM586 351h3v4h-3zM589 349h1v6h-1zM590 351h2v4h-2zM592 351h1v6h-1zM593 351h2v4h-2zM595 353h1v4h-1zM596 351h1v6h-1zM597 351h1v4h-1zM598 351h1v6h-1zM599 353h1v4h-1zM600 355h1v2h-1zM601 353h1v4h-1zM602 353h1v2h-1zM603 353h1v4h-1zM604 351h1v8h-1zM605 353h1v6h-1zM606 353h1v4h-1zM607 353h4v6h-4zM611 355h1v4h-1zM612 353h1v6h-1zM613 355h9v4h-9zM622 355h1v6h-1zM623 355h1v4h-1zM624 355h1v6h-1zM625 357h1v4h-1zM626 355h2v6h-2zM628 355h1v4h-1zM629 355h1v6h-1zM630 357h7v4h-7zM637 357h1v6h-1zM638 357h1v4h-1zM639 357h1v6h-1zM640 357h2v4h-2zM642 357h3v6h-3zM645 359h1v6h-1zM646 359h1v4h-1zM647 357h1v6h-1zM648 359h9v4h-9zM657 359h2v6h-2zM659 361h1v4h-1zM660 359h1v4h-1zM661 359h5v6h-5zM666 361h1v4h-1zM667 359h1v6h-1zM668 361h6v4h-6zM674 361h1v6h-1zM675 361h2v4h-2zM677 361h1v6h-1zM678 361h1v4h-1zM679 361h1v6h-1zM680 361h3v4h-3zM683 361h1v6h-1zM684 363h1v4h-1zM685 361h1v6h-1zM686 363h1v4h-1zM687 361h1v6h-1zM688 361h1v4h-1zM689 363h1v4h-1zM690 361h1v6h-1zM691 363h8v4h-8zM699 363h2v6h-2zM701 363h2v4h-2zM703 363h4v6h-4zM707 365h1v4h-1zM708 363h2v6h-2zM710 363h1v4h-1zM711 363h3v6h-3zM714 365h9v4h-9zM723 365h1v6h-1zM724 365h1v4h-1zM725 363h1v6h-1zM726 363h1v4h-1zM727 361h2v4h-2zM729 359h1v6h-1zM730 359h1v4h-1zM731 357h1v6h-1zM732 359h1v4h-1zM733 357h2v4h-2zM735 355h1v4h-1zM736 353h1v6h-1zM737 353h2v4h-2zM739 351h2v6h-2zM741 349h2v6h-2zM743 349h2v4h-2zM745 347h2v4h-2zM747 345h2v6h-2zM749 347h1v2h-1zM750 345h1v2h-1zM751 341h1v8h-1zM752 343h2v4h-2zM754 341h1v6h-1zM755 341h1v4h-1zM756 339h2v6h-2zM758 339h1v4h-1zM759 337h1v4h-1zM760 337h1v6h-1zM761 337h2v4h-2zM763 335h1v6h-1zM764 335h1v8h-1zM765 335h1v4h-1zM766 333h2v6h-2zM768 333h1v4h-1zM769 331h1v6h-1zM770 331h2v4h-2zM772 329h2v6h-2zM774 329h2v4h-2zM776 327h1v4h-1zM777 327h1v6h-1zM778 325h4v6h-4zM782 325h1v4h-1z"/><path fill="#ffff00" d="M16 383h1v4h-1zM17 381h1v6h-1zM18 383h1v4h-1zM19 383h1v6h-1zM20 381h2v6h-2zM22 383h1v4h-1zM23 383h1v6h-1zM24 383h1v4h-1zM25 381h1v6h-1zM26 383h1v6h-1zM27 381h3v6h-3zM30 381h1v8h-1zM31 383h1v4h-1zM32 381h1v6h-1zM33 381h1v4h-1zM34 381h1v6h-1zM35 383h1v4h-1zM36 381h4v6h-4zM40 381h1v8h-1zM41 381h1v6h-1zM42 381h2v4h-2zM44 381h3v6h-3zM47 383h1v6h-1zM48 381h1v6h-1zM49 383h2v4h-2zM51 381h1v8h-1zM52 381h1v6h-1zM53 383h1v4h-1zM54 381h1v6h-1zM55 383h1v4h-1zM56 381h6v6h-6zM62 381h1v8h-1zM63 381h2v6h-2zM65 383h1v4h-1zM66 381h1v8h-1zM67 383h1v4h-1zM68 381h2v6h-2zM70 383h2v4h-2zM72 381h4v6h-4zM76 383h4v4h-4zM80 381h4v6h-4zM84 381h2v8h-2zM86 381h1v6h-1zM87 383h2v4h-2zM89 381h1v6h-1zM90 383h1v4h-1zM91 381h3v6h-3zM94 383h1v4h-1zM95 381h1v6h-1zM96 383h1v4h-1zM97 381h3v6h-3zM100 383h1v4h-1zM101 381h2v6h-2zM103 383h2v4h-2zM105 381h4v6h-4zM109 383h1v6h-1zM110 383h1v4h-1zM111 381h1v6h-1zM112 381h1v8h-1zM113 385h1v4h-1zM114 381h1v6h-1zM115 383h2v4h-2zM117 381h1v6h-1zM118 383h1v4h-1zM119 381h2v6h-2zM121 383h2v4h-2zM123 383h1v6h-1zM124 381h1v8h-1zM125 383h1v6h-1zM126 381h1v6h-1zM127 383h1v4h-1zM128 383h1v6h-1zM129 381h2v6h-2zM131 383h3v4h-3zM134 381h2v6h-2zM136 383h1v4h-1zM137 381h1v6h-1zM138 383h1v4h-1zM139 383h1v2h-1zM140 381h1v6h-1zM141 383h1v4h-1zM142 383h1v6h-1zM143 381h1v6h-1zM144 383h1v6h-1zM145 383h1v4h-1zM146 383h5v6h-5zM151 381h1v8h-1zM152 383h2v4h-2zM154 381h1v8h-1zM155 383h1v6h-1zM156 383h1v4h-1zM157 385h2v2h-2zM159 383h1v6h-1zM160 383h3v4h-3zM163 381h1v6h-1zM164 385h1v4h-1zM165 383h1v6h-1zM166 383h6v4h-6zM172 383h1v2h-1zM173 383h1v6h-1zM174 383h4v4h-4zM178 381h1v6h-1zM179 383h1v4h-1zM180 383h2v6h-2zM182 383h1v4h-1zM183 381h1v6h-1zM184 385h1v4h-1zM185 383h1v4h-1zM186 383h1v6h-1zM187 383h2v4h-2zM189 383h3v6h-3zM192 383h1v4h-1zM193 383h1v6h-1zM194 383h2v4h-2zM196 381h1v6h-1zM197 383h1v4h-1zM198 381h1v8h-1zM199 383h1v6h-1zM200 383h1v8h-1zM201 383h1v4h-1zM202 385h1v4h-1zM203 383h1v6h-1zM204 383h1v4h-1zM205 383h2v6h-2zM207 383h1v4h-1zM208 385h1v4h-1zM209 383h2v4h-2zM211 383h2v6h-2zM213 383h4v4h-4zM217 383h2v6h-2zM219 383h2v4h-2zM221 385h1v4h-1zM222 383h1v6h-1zM223 385h1v4h-1zM224 383h2v6h-2zM226 381h2v8h-2zM228 383h3v6h-3zM231 383h1v4h-1zM232 385h1v4h-1zM233 385h1v2h-1zM234 383h1v6h-1zM235 381h1v8h-1zM236 383h1v4h-1zM237 383h6v6h-6zM243 385h1v2h-1zM244 383h1v4h-1zM245 383h1v6h-1zM246 385h1v4h-1zM247 383h1v6h-1zM248 383h2v4h-2zM250 383h1v6h-1zM251 385h1v4h-1zM252 383h1v4h-1zM253 381h2v8h-2zM255 383h2v4h-2zM257 383h4v6h-4zM261 383h2v4h-2zM263 383h1v6h-1zM264 385h1v4h-1zM265 383h1v6h-1zM266 383h1v4h-1zM267 381h1v8h-1zM268 383h1v4h-1zM269 383h6v6h-6zM275 383h1v4h-1zM276 383h3v6h-3zM279 385h1v4h-1zM280 383h1v6h-1zM281 383h2v4h-2zM283 381h1v8h-1zM284 383h1v6h-1zM285 381h1v8h-1zM286 381h1v6h-1zM287 385h1v2h-1zM288 383h1v6h-1zM289 383h2v4h-2zM291 381h1v6h-1zM292 383h3v6h-3zM295 383h1v4h-1zM296 383h3v6h-3zM299 383h1v4h-1zM300 383h1v6h-1zM301 383h1v4h-1zM302 383h1v6h-1zM303 201h1v6h-1zM304 201h1v4h-1zM305 201h1v6h-1zM306 203h1v4h-1zM307 203h1v2h-1zM308 203h2v4h-2zM310 201h2v6h-2zM312 203h1v2h-1zM313 203h2v4h-2zM315 201h2v6h-2zM317 201h1v4h-1zM318 201h1v6h-1zM319 203h1v4h-1zM320 201h2v4h-2zM322 201h2v6h-2zM324 203h1v4h-1zM325 203h1v2h-1zM326 201h1v4h-1zM327 203h1v2h-1zM328 201h1v6h-1zM329 203h1v4h-1zM330 201h1v6h-1zM331 203h1v4h-1zM332 201h3v6h-3zM335 201h1v4h-1zM336 201h2v6h-2zM338 203h1v4h-1zM339 201h1v6h-1zM340 203h1v4h-1zM341 201h3v6h-3zM344 203h1v4h-1zM345 201h1v4h-1zM346 201h1v6h-1zM347 201h1v4h-1zM348 203h1v2h-1zM349 201h1v6h-1zM350 201h1v4h-1zM351 203h1v4h-1zM352 201h1v6h-1zM353 203h1v2h-1zM354 201h1v4h-1zM355 201h3v6h-3zM358 201h1v4h-1zM359 201h4v6h-4zM363 203h1v4h-1zM364 201h2v6h-2zM366 203h1v4h-1zM367 201h1v6h-1zM368 203h1v2h-1zM369 201h5v6h-5zM374 201h1v4h-1zM375 201h1v6h-1zM376 203h2v4h-2zM378 201h3v6h-3zM381 201h1v4h-1zM382 201h1v6h-1zM383 201h1v4h-1zM384 201h1v6h-1zM385 201h1v4h-1zM386 201h1v6h-1zM387 203h1v4h-1zM388 201h1v6h-1zM389 201h1v4h-1zM390 201h1v6h-1zM391 203h1v4h-1zM392 201h2v6h-2zM394 201h1v4h-1zM395 201h1v6h-1zM396 203h1v4h-1zM397 201h1v4h-1zM398 201h1v6h-1zM399 381h2v6h-2zM401 383h3v4h-3zM404 381h3v6h-3zM407 383h1v4h-1zM408 381h4v6h-4zM412 383h1v6h-1zM413 383h1v4h-1zM414 381h6v6h-6zM420 381h1v8h-1zM421 381h1v6h-1zM422 383h1v4h-1zM423 381h1v6h-1zM424 383h1v4h-1zM425 381h3v6h-3zM428 383h2v4h-2zM430 381h1v4h-1zM431 381h1v6h-1zM432 381h1v4h-1zM433 383h2v4h-2zM435 381h2v6h-2zM437 383h1v4h-1zM438 381h1v6h-1zM439 383h1v2h-1zM440 381h3v6h-3zM443 381h1v4h-1zM444 381h1v6h-1zM445 381h1v4h-1zM446 383h1v4h-1zM447 381h1v6h-1zM448 383h3v4h-3zM451 381h1v6h-1zM452 383h1v4h-1zM453 381h1v6h-1zM454 383h1v4h-1zM455 381h2v6h-2zM457 383h1v4h-1zM458 381h1v6h-1zM459 383h1v4h-1zM460 381h2v6h-2zM462 383h1v4h-1zM463 381h1v6h-1zM464 381h2v8h-2zM466 383h1v4h-1zM467 381h2v4h-2zM469 381h3v6h-3zM472 383h1v2h-1zM473 383h1v4h-1zM474 381h1v6h-1zM475 383h1v4h-1zM476 383h1v6h-1zM477 381h1v6h-1zM478 383h1v4h-1zM479 381h1v6h-1zM480 383h1v4h-1zM481 381h5v6h-5zM486 383h2v4h-2zM488 381h1v4h-1zM489 381h1v6h-1zM490 383h2v4h-2zM492 381h2v6h-2zM494 383h3v4h-3zM497 383h1v6h-1zM498 381h5v6h-5zM503 383h1v4h-1zM504 381h1v6h-1zM505 383h2v4h-2zM507 381h2v6h-2zM509 383h3v4h-3zM512 381h1v6h-1zM513 383h2v4h-2zM515 381h2v6h-2zM517 381h1v4h-1zM518 381h2v6h-2zM520 383h1v4h-1zM521 381h3v6h-3zM524 383h6v4h-6zM530 381h2v6h-2zM532 383h1v4h-1zM533 383h1v6h-1zM534 381h1v4h-1zM535 381h1v6h-1zM536 383h1v6h-1zM537 383h1v4h-1zM538 381h1v6h-1zM539 383h3v4h-3zM542 381h1v6h-1zM543 383h1v6h-1zM544 381h1v6h-1zM545 383h2v4h-2zM547 381h1v6h-1zM548 383h4v4h-4zM552 383h1v6h-1zM553 381h1v6h-1zM554 383h1v4h-1zM555 381h2v6h-2zM557 383h3v4h-3zM560 381h1v6h-1zM561 383h2v4h-2zM563 381h1v6h-1zM564 381h1v4h-1zM565 383h4v4h-4zM569 383h1v6h-1zM570 383h4v4h-4zM574 383h2v6h-2zM576 381h1v8h-1zM577 383h1v4h-1zM578 381h1v6h-1zM579 381h1v8h-1zM580 381h1v6h-1zM581 383h1v6h-1zM582 383h1v4h-1zM583 381h1v6h-1zM584 383h2v4h-2zM586 383h1v6h-1zM587 383h1v4h-1zM588 381h1v8h-1zM589 381h1v6h-1zM590 383h2v6h-2zM592 383h1v4h-1zM593 383h2v6h-2zM595 383h1v4h-1zM596 383h1v6h-1zM597 385h1v4h-1zM598 383h4v4h-4zM602 381h1v6h-1zM603 383h2v6h-2zM605 385h1v4h-1zM606 383h2v6h-2zM608 385h1v4h-1zM609 383h1v2h-1zM610 383h3v6h-3zM613 383h2v4h-2zM615 383h1v6h-1zM616 383h1v4h-1zM617 383h1v6h-1zM618 383h1v4h-1zM619 383h1v6h-1zM620 383h2v4h-2zM622 383h1v6h-1zM623 383h1v4h-1zM624 385h1v4h-1zM625 383h1v2h-1zM626 383h1v6h-1zM627 385h1v4h-1zM628 383h1v6h-1zM629 383h1v4h-1zM630 385h1v4h-1zM631 383h3v4h-3zM634 381h1v6h-1zM635 383h1v4h-1zM636 383h2v6h-2zM638 383h1v4h-1zM639 383h1v6h-1zM640 381h1v6h-1zM641 383h1v6h-1zM642 383h1v4h-1zM643 383h2v6h-2zM645 381h1v6h-1zM646 383h2v6h-2zM648 383h4v4h-4zM652 383h1v6h-1zM653 383h1v4h-1zM654 383h3v6h-3zM657 385h1v4h-1zM658 383h1v6h-1zM659 383h1v4h-1zM660 383h1v6h-1zM661 385h1v4h-1zM662 383h4v6h-4zM666 383h1v4h-1zM667 383h2v6h-2zM669 381h1v8h-1zM670 383h1v6h-1zM671 381h1v8h-1zM672 381h1v6h-1zM673 383h4v6h-4zM677 383h1v4h-1zM678 385h1v4h-1zM679 383h3v6h-3zM682 383h2v4h-2zM684 383h1v6h-1zM685 383h1v4h-1zM686 383h2v6h-2zM688 385h1v4h-1zM689 383h1v4h-1zM690 383h1v6h-1zM691 385h1v4h-1zM692 383h1v6h-1zM693 385h1v4h-1zM694 383h1v6h-1zM695 383h1v4h-1zM696 383h1v6h-1zM697 383h2v4h-2zM699 383h1v6h-1zM700 385h1v2h-1zM701 383h2v6h-2zM703 383h1v4h-1zM704 383h1v6h-1zM705 383h1v4h-1zM706 383h1v6h-1zM707 385h1v4h-1zM708 383h1v6h-1zM709 385h1v2h-1zM710 383h2v4h-2zM712 383h1v6h-1zM713 381h1v6h-1zM714 383h1v6h-1zM715 383h1v4h-1zM716 383h4v6h-4zM720 383h1v4h-1zM721 383h1v6h-1zM722 383h1v4h-1zM723 201h1v6h-1zM724 203h1v4h-1zM725 201h1v4h-1zM726 201h2v6h-2zM728 203h1v4h-1zM729 201h2v4h-2zM731 201h2v6h-2zM733 203h1v4h-1zM734 201h1v6h-1zM735 203h1v4h-1zM736 201h2v4h-2zM738 203h2v4h-2zM740 201h1v4h-1zM741 201h4v6h-4zM745 203h1v4h-1zM746 201h2v4h-2zM748 201h2v6h-2zM750 201h2v4h-2zM752 201h2v6h-2zM754 203h2v2h-2zM756 201h1v4h-1zM757 201h3v6h-3zM760 201h1v4h-1zM761 201h5v6h-5zM766 201h2v4h-2zM768 201h3v6h-3zM771 203h1v4h-1zM772 201h2v6h-2zM774 201h2v4h-2zM776 201h1v6h-1zM777 201h1v4h-1zM778 201h1v6h-1zM779 203h1v4h-1zM780 201h2v6h-2zM782 203h1v4h-1zM303 199h1v190h-1zM304 199h1v4h-1zM399 201h1v188h-1zM400 379h1v8h-1zM723 197h1v192h-1z"/><path fill="#ffff00" d="M783 331L771 338.5L783 346z" shape-rendering="geometricPrecision"/><g shape-rendering="geometricPrecision"><path d="M364.5 28.5H433.5V43L431 45.5H405L399.5 52.2L394 45.5H367L364.5 43z" fill="#3366ff" stroke="#99ccff" stroke-width="1"/></g><g shape-rendering="geometricPrecision"><path d="M0 396.5H8" stroke="#a09860" stroke-width="1"/><path d="M0 382H8.5L15 389L8.5 396H0z" fill="#00ffff"/></g><g shape-rendering="geometricPrecision"><rect x="15.5" y="3.5" width="22" height="20" fill="#000" stroke="#a8a8a8"/><rect x="40.5" y="3.5" width="22" height="20" fill="#000" stroke="#a8a8a8"/><rect x="65.5" y="3.5" width="22" height="20" fill="#000" stroke="#a8a8a8"/><path d="M16.2 9.0L16.7 8.1L17.2 7.3L17.7 6.7L18.2 6.3L18.7 6.2L19.2 6.3L19.7 6.7L20.2 7.3L20.7 8.0L21.2 8.9L21.7 9.8L22.2 10.6L22.7 11.2L23.2 11.7L23.7 11.8L24.2 11.7L24.7 11.4L25.2 10.8L25.7 10.0L26.2 9.2L26.7 8.3L27.2 7.5L27.7 6.8L28.2 6.4L28.7 6.2L29.2 6.2L29.7 6.6L30.2 7.1L30.7 7.9L31.2 8.7L31.7 9.6L32.2 10.4L32.7 11.1L33.2 11.6L33.7 11.8L34.2 11.8L34.7 11.5L35.2 10.9L35.7 10.2L36.2 9.3L36.7 8.5" fill="none" stroke="#ffff00" stroke-width="2.700"/><path d="M16.0 17.8L16.5 16.9L17.0 16.1L17.5 15.5L18.0 15.1L18.5 15.0L19.0 15.1L19.5 15.5L20.0 16.1L20.5 16.8L21.0 17.7L21.5 18.6L22.0 19.4L22.5 20.0L23.0 20.5L23.5 20.6L24.0 20.5L24.5 20.2L25.0 19.6L25.5 18.8L26.0 18.0L26.5 17.1L27.0 16.3L27.5 15.6L28.0 15.2L28.5 15.0L29.0 15.0L29.5 15.4L30.0 15.9L30.5 16.7L31.0 17.5L31.5 18.4L32.0 19.2L32.5 19.9L33.0 20.4L33.5 20.6L34.0 20.6L34.5 20.3L35.0 19.7L35.5 19.0L36.0 18.1L36.5 17.3L37.0 16.4" fill="none" stroke="#00ffff" stroke-width="2.700"/><path d="M44.800 20.200L58.500 5.800" stroke="#00ff00" stroke-width="2.600" stroke-linecap="round"/><defs><filter id="bl" x="-20%" y="-20%" width="140%" height="140%"><feGaussianBlur stdDeviation="0.55"/></filter></defs><g filter="url(#bl)"><rect x="68" y="13.500" width="12.500" height="8.500" rx="2.500" fill="#7c7c7c"/><rect x="73" y="5.500" width="11.500" height="10" rx="3.500" fill="#7c7c7c"/><rect x="72.500" y="9" width="8" height="12.500" rx="2" fill="#909090"/><path d="M70.500 21V15M73 21.500V13M75.500 21.500V8M78 21V6.500M80.500 15V6.500M83 13V8" stroke="#b4b4b4" stroke-width="1.100"/><path d="M71.800 20V15M74.300 20V11M76.800 19V8M79.300 15V8M81.800 12V8" stroke="#6a6a6a" stroke-width="0.800"/></g><rect x="90.5" y="2.5" width="45" height="21" rx="3.5" fill="none" stroke="#6a6a78"/><path d="M90.5 20V6A3.5 3.5 0 0 1 94 2.5H132" fill="none" stroke="#0a0a9a" stroke-width="1.2"/></g><path shape-rendering="geometricPrecision" fill="#ccffff" d="M145 7l2-2h7l2 2v17h-2v-17h-7v15h-2zM141 20h4v2h-4zM156 20h6v2h-6zM143 17h1v7h-1zM141 20.500h1.500v2.500h-1.500zM157.300 18h1v6h-1zM159.200 18h1v6h-1zM161 18h1v5.500h-1zM147.300 3h1v6h-1zM149.100 3h1v6h-1zM150.900 3h1v6h-1zM152.700 3h1v6h-1z"/><g shape-rendering="geometricPrecision" fill="#454538"><rect x="190" y="12.5" width="18" height="3.5"/><rect x="189.5" y="13.5" width="2" height="2"/><rect x="193" y="15" width="2" height="4"/><rect x="197" y="15" width="2" height="4.5"/><rect x="201" y="15" width="2" height="4"/><path fill-rule="evenodd" d="M209.5 9C212 9 213.3 11.5 213.3 15S212 21 209.5 21S205.7 18.500 205.700 15S207 9 209.5 9zM208.3 12h1.800v5h-1.800z"/></g><g shape-rendering="geometricPrecision"><path d="M216 3.500H235.500V22.500H218.500L216 20z" fill="#3434a4" stroke="#c8f0e8" stroke-width="1"/><path d="M220 3.500V12.500H232.500V3.500" fill="#38309c" stroke="#c0b8f0" stroke-width="1"/><rect x="220.5" y="15.500" width="11" height="7" fill="#3030a0" stroke="#c8f0e8" stroke-width="0.800"/><rect x="226.300" y="16" width="4.300" height="5.800" fill="#ccffff"/><rect x="223" y="17" width="1.500" height="4.500" fill="#101080"/></g><g shape-rendering="geometricPrecision"><rect x="246" y="4" width="11" height="10" fill="#3838b0" stroke="#454538" stroke-width="2"/><path d="M248.500 6.700H254.500M248.500 9.200H254.500M248.500 11.600H254.500" stroke="#454538" stroke-width="1.200"/><rect x="242.200" y="14.300" width="18.700" height="8.500" rx="1" fill="#3838b0" stroke="#454538" stroke-width="2"/><rect x="244.500" y="17.200" width="14.500" height="3" fill="#454538"/></g><rect x="266" y="1" width="1" height="26" fill="#000"/><rect x="267" y="1" width="1" height="26" fill="#3366ff"/><g shape-rendering="geometricPrecision"><rect x="273.500" y="3.500" width="21" height="21" fill="#000" stroke="#a8a8a8"/><rect x="521.500" y="3.500" width="21" height="21" fill="#000" stroke="#a8a8a8"/><rect x="299" y="3" width="100" height="22" rx="11" fill="#000"/><path d="M330 3.500H310A10.500 10.500 0 0 0 302.500 21.500" fill="none" stroke="#0808a0" stroke-width="1.200"/><path d="M395.500 6.500A10.500 10.500 0 0 1 388 24.500H380" fill="none" stroke="#6e6e5c" stroke-width="1"/><rect x="548" y="3" width="99" height="22" rx="11" fill="#000"/><path d="M579 3.500H559A10.500 10.500 0 0 0 551.500 21.500" fill="none" stroke="#0808a0" stroke-width="1.200"/><path d="M643.500 6.500A10.500 10.500 0 0 1 636 24.500H628" fill="none" stroke="#6e6e5c" stroke-width="1"/><rect x="403.600" y="3.300" width="112.400" height="20.900" fill="#70708c"/><rect x="405" y="3.300" width="109.400" height="20.800" fill="#ff6600"/><rect x="407.300" y="5.700" width="104.800" height="16.100" fill="#000"/><path d="M407.80 12.02L408.05 13.31L408.30 14.62L408.55 15.90L408.80 17.10L409.05 18.16L409.30 19.05L409.55 19.71L409.80 20.14L410.05 20.30L410.30 20.19L410.55 19.82L410.80 19.20L411.05 18.36L411.30 17.32L411.55 16.15L411.80 14.88L412.05 13.57L412.30 12.28L412.55 11.05L412.80 9.94L413.05 9.00L413.30 8.26L413.55 7.76L413.80 7.52L414.05 7.55L414.30 7.84L414.55 8.39L414.80 9.17L415.05 10.15L415.30 11.28L415.55 12.53L415.80 13.83L416.05 15.14L416.30 16.39L416.55 17.54L416.80 18.54L417.05 19.34L417.30 19.91L417.55 20.23L417.80 20.29L418.05 20.07L418.30 19.60L418.55 18.89L418.80 17.96L419.05 16.87L419.30 15.65L419.55 14.36L419.80 13.05L420.05 11.77L420.30 10.59L420.55 9.54L420.80 8.68L421.05 8.03L421.30 7.63L421.55 7.50L421.80 7.63L422.05 8.03L422.30 8.68L422.55 9.54L422.80 10.59L423.05 11.77L423.30 13.05L423.55 14.36L423.80 15.65L424.05 16.87L424.30 17.96L424.55 18.89L424.80 19.60L425.05 20.07L425.30 20.29L425.55 20.23L425.80 19.91L426.05 19.34L426.30 18.54L426.55 17.54L426.80 16.39L427.05 15.14L427.30 13.83L427.55 12.53L427.80 11.28L428.05 10.15L428.30 9.17L428.55 8.39L428.80 7.84L429.05 7.55L429.30 7.52L429.55 7.76L429.80 8.26L430.05 9.00L430.30 9.94L430.55 11.05L430.80 12.28L431.05 13.57L431.30 14.88L431.55 16.15L431.80 17.32L432.05 18.36L432.30 19.20L432.55 19.82L432.80 20.19L433.05 20.30L433.30 20.14L433.55 19.71L433.80 19.05L434.05 18.16L434.30 17.10L434.55 15.90L434.80 14.62L435.05 13.31L435.30 12.02L435.55 10.81L435.80 9.74L436.05 8.83L436.30 8.14L436.55 7.69L436.80 7.51L437.05 7.59L437.30 7.93L437.55 8.53L437.80 9.35L438.05 10.36L438.30 11.53L438.55 12.79L438.80 14.10L439.05 15.40L439.30 16.63L439.55 17.76L439.80 18.72L440.05 19.48L440.30 20.00L440.55 20.27L440.80 20.27L441.05 20.00L441.30 19.48L441.55 18.72L441.80 17.76L442.05 16.63L442.30 15.40L442.55 14.10L442.80 12.79L443.05 11.53L443.30 10.36L443.55 9.35L443.80 8.53L444.05 7.93L444.30 7.59L444.55 7.51L444.80 7.69L445.05 8.14L445.30 8.83L445.55 9.74L445.80 10.81L446.05 12.02L446.30 13.31L446.55 14.62L446.80 15.90L447.05 17.10L447.30 18.16L447.55 19.05L447.80 19.71L448.05 20.14L448.30 20.30L448.55 20.19L448.80 19.82L449.05 19.20L449.30 18.36L449.55 17.32L449.80 16.15L450.05 14.88L450.30 13.57L450.55 12.28L450.80 11.05L451.05 9.94L451.30 9.00L451.55 8.26L451.80 7.76L452.05 7.52L452.30 7.55L452.55 7.84L452.80 8.39L453.05 9.17L453.30 10.15L453.55 11.28L453.80 12.53L454.05 13.83L454.30 15.14L454.55 16.39L454.80 17.54L455.05 18.54L455.30 19.34L455.55 19.91L455.80 20.23L456.05 20.29L456.30 20.07L456.55 19.60L456.80 18.89L457.05 17.96L457.30 16.87L457.55 15.65L457.80 14.36L458.05 13.05L458.30 11.77L458.55 10.59L458.80 9.54L459.05 8.68L459.30 8.03L459.55 7.63L459.80 7.50L460.05 7.63L460.30 8.03L460.55 8.68L460.80 9.54L461.05 10.59L461.30 11.77L461.55 13.05L461.80 14.36L462.05 15.65L462.30 16.87L462.55 17.96L462.80 18.89L463.05 19.60L463.30 20.07L463.55 20.29L463.80 20.23L464.05 19.91L464.30 19.34L464.55 18.54L464.80 17.54L465.05 16.39L465.30 15.14L465.55 13.83L465.80 12.53L466.05 11.28L466.30 10.15L466.55 9.17L466.80 8.39L467.05 7.84L467.30 7.55L467.55 7.52L467.80 7.76L468.05 8.26L468.30 9.00L468.55 9.94L468.80 11.05L469.05 12.28L469.30 13.57L469.55 14.88L469.80 16.15L470.05 17.32L470.30 18.36L470.55 19.20L470.80 19.82L471.05 20.19L471.30 20.30L471.55 20.14L471.80 19.71L472.05 19.05L472.30 18.16L472.55 17.10L472.80 15.90L473.05 14.62L473.30 13.31L473.55 12.02L473.80 10.81L474.05 9.74L474.30 8.83L474.55 8.14L474.80 7.69L475.05 7.51L475.30 7.59L475.55 7.93L475.80 8.53L476.05 9.35L476.30 10.36L476.55 11.53L476.80 12.79L477.05 14.10L477.30 15.40L477.55 16.63L477.80 17.76L478.05 18.72L478.30 19.48L478.55 20.00L478.80 20.27L479.05 20.27L479.30 20.00L479.55 19.48L479.80 18.72L480.05 17.76L480.30 16.63L480.55 15.40L480.80 14.10L481.05 12.79L481.30 11.53L481.55 10.36L481.80 9.35L482.05 8.53L482.30 7.93L482.55 7.59L482.80 7.51L483.05 7.69L483.30 8.14L483.55 8.83L483.80 9.74L484.05 10.81L484.30 12.02L484.55 13.31L484.80 14.62L485.05 15.90L485.30 17.10L485.55 18.16L485.80 19.05L486.05 19.71L486.30 20.14L486.55 20.30L486.80 20.19L487.05 19.82L487.30 19.20L487.55 18.36L487.80 17.32L488.05 16.15L488.30 14.88L488.55 13.57L488.80 12.28L489.05 11.05L489.30 9.94L489.55 9.00L489.80 8.26L490.05 7.76L490.30 7.52L490.55 7.55L490.80 7.84L491.05 8.39L491.30 9.17L491.55 10.15L491.80 11.28L492.05 12.53L492.30 13.83L492.55 15.14L492.80 16.39L493.05 17.54L493.30 18.54L493.55 19.34L493.80 19.91L494.05 20.23L494.30 20.29L494.55 20.07L494.80 19.60L495.05 18.89L495.30 17.96L495.55 16.87L495.80 15.65L496.05 14.36L496.30 13.05L496.55 11.77L496.80 10.59L497.05 9.54L497.30 8.68L497.55 8.03L497.80 7.63L498.05 7.50L498.30 7.63L498.55 8.03L498.80 8.68L499.05 9.54L499.30 10.59L499.55 11.77L499.80 13.05L500.05 14.36L500.30 15.65L500.55 16.87L500.80 17.96L501.05 18.89L501.30 19.60L501.55 20.07L501.80 20.29L502.05 20.23L502.30 19.91L502.55 19.34L502.80 18.54L503.05 17.54L503.30 16.39L503.55 15.14L503.80 13.83L504.05 12.53L504.30 11.28L504.55 10.15L504.80 9.17L505.05 8.39L505.30 7.84L505.55 7.55L505.80 7.52L506.05 7.76L506.30 8.26L506.55 9.00L506.80 9.94L507.05 11.05L507.30 12.28L507.55 13.57L507.80 14.88L508.05 16.15L508.30 17.32L508.55 18.36L508.80 19.20L509.05 19.82L509.30 20.19L509.55 20.30L509.80 20.14L510.05 19.71L510.30 19.05L510.55 18.16L510.80 17.10L511.05 15.90L511.30 14.62L511.55 13.31L511.80 12.02" fill="none" stroke="#00ffff" stroke-width="2.200" stroke-linejoin="round"/></g><g shape-rendering="geometricPrecision" fill="#ffff00"><rect x="16" y="456.600" width="17.800" height="2.200"/><rect x="16.3" y="461" width="2.5" height="1"/><rect x="20.3" y="461" width="2.5" height="1"/><rect x="24.3" y="461" width="2.5" height="1"/><rect x="28.3" y="461" width="2.5" height="1"/><rect x="32.3" y="461" width="1.5" height="1"/></g><circle cx="49.2" cy="464.700" r="9.200" fill="none" stroke="#ff0000" stroke-width="1.400" shape-rendering="geometricPrecision"/><path d="M64 462.500H66.5V458H70V462.500H74.5V458H79V462.500H82" fill="none" stroke="#ffff00" stroke-width="1.800" shape-rendering="geometricPrecision"/><path d="M64 466.500H66.5V471.500H70V466.500H74.5V471.500H79V466.500H82" fill="none" stroke="#8c8c78" stroke-width="1.500" shape-rendering="geometricPrecision"/><g shape-rendering="geometricPrecision" fill="#00ffff"><rect x="176" y="456.600" width="17.800" height="2.200"/><rect x="176.3" y="461" width="2.5" height="1"/><rect x="180.3" y="461" width="2.5" height="1"/><rect x="184.3" y="461" width="2.5" height="1"/><rect x="188.3" y="461" width="2.5" height="1"/><rect x="192.3" y="461" width="1.5" height="1"/></g><circle cx="209.2" cy="464.700" r="9.200" fill="none" stroke="#ff0000" stroke-width="1.400" shape-rendering="geometricPrecision"/><path d="M224 462.500H226.5V458H230V462.500H234.5V458H239V462.500H242" fill="none" stroke="#00ffff" stroke-width="1.800" shape-rendering="geometricPrecision"/><path d="M224 466.500H226.5V471.500H230V466.500H234.5V471.500H239V466.500H242" fill="none" stroke="#8c8c78" stroke-width="1.500" shape-rendering="geometricPrecision"/><g shape-rendering="geometricPrecision"><rect x="87" y="453" width="82" height="22" rx="11" fill="#000"/><rect x="247" y="453" width="82" height="22" rx="11" fill="#000"/><rect x="405" y="453" width="78" height="22" rx="11" fill="#000"/><rect x="513" y="453" width="130" height="22" rx="11" fill="#000"/><path d="M385 456.500H391L397 472H403" fill="none" stroke="#99ccff" stroke-width="2"/><path d="M385 456H391L397 471.500H403" fill="none" stroke="#e0f0ff" stroke-width="0.700"/></g><rect x="171" y="452" width="1" height="26" fill="#000"/><rect x="172" y="452" width="1" height="26" fill="#3366ff"/><rect x="331" y="452" width="1" height="26" fill="#000"/><rect x="332" y="452" width="1" height="26" fill="#3366ff"/><rect x="501" y="452" width="1" height="26" fill="#000"/><rect x="502" y="452" width="1" height="26" fill="#3366ff"/></svg>
<div class="t" style="left:168.2px;top:0.8px;font-size:25px;color:#00ff00;transform-origin:0 0;transform:scaleX(0.9);font-weight:bold;">T</div><div class="t" style="left:277.3px;top:4.6px;font-size:18.5px;color:#ccffff;transform-origin:0 0;transform:scaleX(0.88);font-weight:bold;">M</div><div class="t" style="left:522.8px;top:4.6px;font-size:18.5px;color:#ccffff;font-weight:bold;">W</div><div class="t" style="left:324px;top:7px;font-size:16px;color:#fff;-webkit-text-stroke:0.15px #000;">200ms</div><div class="t" style="left:572.3px;top:7px;font-size:16px;color:#fff;-webkit-text-stroke:0.15px #000;">200ms</div><div class="t" style="left:708px;top:7px;font-size:16px;color:#ccffff;-webkit-text-stroke:0.15px #37309b;letter-spacing:-0.4px;">Menu</div><div class="t" style="left:376.3px;top:29.2px;font-size:16px;color:#fff;transform-origin:0 0;transform:scaleX(0.96);-webkit-text-stroke:0.15px #3366ff;">0.000s</div><div class="t" style="left:0.8px;top:380.9px;font-size:16.5px;color:#ffff00;transform-origin:0 0;transform:scaleX(0.78);font-weight:bold;text-shadow:-1px 0 0 #1c1880;">2</div><div class="t" style="left:16px;top:462.5px;font-size:12.5px;color:#ffff00;transform-origin:0 0;transform:scaleX(0.89);-webkit-text-stroke:0.3px #ffff00;">DC</div><div class="t" style="left:176.2px;top:462.5px;font-size:12.5px;color:#00ffff;transform-origin:0 0;transform:scaleX(0.89);-webkit-text-stroke:0.3px #00ffff;">DC</div><div class="t" style="left:42.2px;top:457.5px;font-size:14px;color:#ffff00;transform-origin:0 0;transform:scaleX(0.9);-webkit-text-stroke:0.4px #ffff00;">20</div><div class="t" style="left:202.2px;top:457.5px;font-size:14px;color:#00ffff;transform-origin:0 0;transform:scaleX(0.9);-webkit-text-stroke:0.4px #00ffff;">20</div><div class="t" style="left:106px;top:456.5px;font-size:18px;color:#ffff00;transform-origin:0 0;transform:scaleX(0.93);-webkit-text-stroke:0.2px #000;">1.00V</div><div class="t" style="left:266px;top:456.5px;font-size:18px;color:#00ffff;transform-origin:0 0;transform:scaleX(0.93);-webkit-text-stroke:0.2px #000;">1.00V</div><div class="t" style="left:421.5px;top:456.5px;font-size:18px;color:#ffff00;transform-origin:0 0;transform:scaleX(0.93);-webkit-text-stroke:0.2px #000;">1.00V</div><div class="t" style="left:354px;top:456.5px;font-size:17px;color:#ffff00;transform-origin:0 0;transform:scaleX(0.74);-webkit-text-stroke:0.2px #37309b;">CH1</div><div class="t" style="left:535.5px;top:456px;font-size:17.6px;color:#ffff00;-webkit-text-stroke:0.2px #000;">0.00000Hz</div><div class="t" style="left:671px;top:456px;font-size:16px;color:#fff;-webkit-text-stroke:0.15px #37309b;">1-Jan-09 01:00</div><div class="t" style="left:649.5px;top:461.7px;font-size:12.3px;color:rgba(255,128,128,0.92);-webkit-text-stroke:0.3px rgba(255,128,128,0.5);">© H.Kuhlmann 2018-2025</div>
</body></html>
